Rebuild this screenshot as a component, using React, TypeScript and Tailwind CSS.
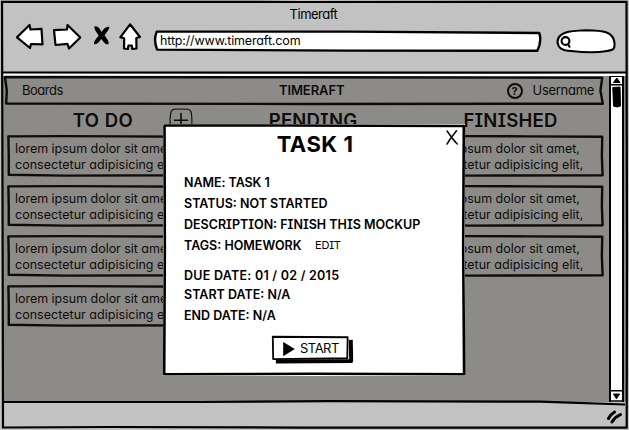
import React from 'react';

const INK = '#0c0c0a';

/* Hand-drawn rectangle stretched over its parent; the stroke keeps its thickness. */
function Outline({ d, color = INK, width = 2.4, fill = 'none' }: { d?: string; color?: string; width?: number; fill?: string }) {
  return (
    <svg className="pointer-events-none absolute inset-0 h-full w-full overflow-visible" viewBox="0 0 100 100" preserveAspectRatio="none">
      <path
        d={d ?? 'M.2 1 C20 0 40 0 60 1 L99.6 2 L99.4 50 L99.8 98 C70 98 50 99.5 30 99 L.4 97 L.4 50 Z'}
        fill={fill}
        stroke={color}
        strokeWidth={width}
        strokeLinejoin="round"
        vectorEffect="non-scaling-stroke"
      />
    </svg>
  );
}

function NavIcons() {
  return (
    <svg className="h-[30px] w-[128px]" viewBox="15 22 128 30" fill="#fff" stroke="#000" strokeWidth="2.2" strokeLinejoin="round" strokeLinecap="round">
      <path d="M17 37.3 L29.5 25 L30.5 29.5 L41.5 28.8 L42.5 44.3 L31 44 L30 48 Z" />
      <path d="M54 30.2 L67 29.5 L67.5 25 L80.3 37.5 L69 48.5 L67.5 43.8 L55.5 45 Z" />
      <path d="M94.5 26.5 C97.5 25.5 100 29 101.7 32 C103.5 29 106.5 26 109.3 27 C109.5 29.5 106 33 104.5 35.3 C106.5 38 109.5 42 108.5 44 C105.5 45.5 103 41 101.3 39 C99.5 41.5 97 45 94 44 C93.5 41.5 97 38 98.7 35.6 C97 33 94 29.5 94.5 26.5 Z" fill="#000" stroke="none" />
      <path d="M130 24.3 L140 37 L136.3 38 L136.5 48.5 L132.3 49 L131.8 45.5 L128.4 45.5 L128 49 L124 48.5 L124.2 38.3 L120.3 37.3 Z" />
    </svg>
  );
}

function Card() {
  return (
    <div className="relative h-10 w-[190px] pl-[7px] pt-[5px]">
      <Outline />
      <p className="whitespace-nowrap text-[12.5px] leading-4 tracking-[-0.03px]">lorem ipsum dolor sit amet,</p>
      <p className="whitespace-nowrap text-[12.5px] leading-4 tracking-[0.03px]">consectetur adipisicing elit,</p>
    </div>
  );
}

function Column({ title, count, headClass, add }: { title: string; count: number; headClass: string; add?: boolean }) {
  return (
    <section className="w-[190px]">
      <div className="relative flex h-[32px] items-start justify-center">
        <h2 className={headClass}>{title}</h2>
        {add && (
          <svg className="absolute left-[161px] top-[4px] h-6 w-6" viewBox="0 0 24 24" fill="none" stroke={INK} strokeWidth="1.6" strokeLinecap="round">
            <path d="M2 4 C3 1 5 1 12 1 C18 1 21 1 22 3.5 C23 7 23 15 22.5 21 C17 23.3 7 23 2 22 C.8 16 .8 9 2 4 Z" strokeWidth="1.1" />
            <path d="M12 5.5 V19 M5.5 12.2 H18.5" />
          </svg>
        )}
      </div>
      <div className="flex flex-col gap-[10px]">
        {Array.from({ length: count }, (_, i) => (
          <Card key={i} />
        ))}
      </div>
    </section>
  );
}

function Scrollbar() {
  return (
    <div className="flex w-[15px] flex-col items-center justify-between border-x-2 border-black bg-white">
      <svg className="h-[34px] w-[13px] shrink-0" viewBox="0 0 13 34">
        <path d="M0 .2 H13 M0 8.8 H13" stroke="#000" strokeWidth="1.6" />
        <path d="M3.5 6.5 L6.8 2 L10 6.5 Z" stroke="#000" />
        <path d="M2.8 11.5 L10 11 L10.5 30 Q7 32 3.5 30 Z" stroke="#000" strokeLinejoin="round" />
      </svg>
      <svg className="h-[12px] w-[13px] shrink-0" viewBox="0 0 13 12">
        <path d="M0 .8 H13 M0 11 H13" stroke="#000" strokeWidth="1.6" />
        <path d="M3.5 4 L9.5 4 L6.5 8.8 Z" stroke="#000" />
      </svg>
    </div>
  );
}

function Dialog() {
  return (
    <div className="absolute left-[163px] top-[124px] h-[252px] w-[302px] bg-white text-black">
      <Outline d="M.5 .6 L40 .6 L99.6 .8 L99.4 50 L99.7 99.3 L50 99.1 L.4 99.3 L.6 50 Z" color="#000" width={2.6} />
      <svg className="absolute right-[7px] top-[6px] h-[15px] w-[12px]" viewBox="0 0 12 15" fill="none" stroke="#000" strokeWidth="1.5" strokeLinecap="round">
        <path d="M1 1 C4 5 7 10 11.3 14 M10.5 .8 C7 5 4 9 1 14" />
      </svg>
      <h1 className="pl-[2px] pt-[6px] text-center text-[22px] font-bold leading-7 tracking-[0.5px]">TASK 1</h1>
      <div className="pl-[21px] pt-[14px] text-[12.5px] font-semibold leading-[21px]">
        <p className="h-[21px] tracking-[-0.05px]">NAME: TASK 1</p>
        <p className="h-[21px] tracking-[0px]">STATUS: NOT STARTED</p>
        <p className="h-[21px] tracking-[0px] [font-feature-settings:'cv11','cv08']">DESCRIPTION: FINISH THIS MOCKUP</p>
        <p className="flex h-[21px]">
          <span className="w-[131px] tracking-[0px]">TAGS: HOMEWORK</span>
          <span className="text-[11px] font-normal tracking-[-0.2px] [font-feature-settings:'cv08']">EDIT</span>
        </p>
        <div className="flex flex-col gap-[4px] pt-[12px] leading-4">
          <p className="tracking-[0.25px]">DUE DATE: 01 / 02 / 2015</p>
          <p className="-mt-px tracking-[0px]">START DATE: N/A</p>
          <p className="mt-px tracking-[0px]">END DATE: N/A</p>
        </div>
      </div>
      <button className="relative ml-[109px] mt-[13px] flex h-[24px] w-[78px] items-center pl-[11px]">
        <Outline d="M5 102 L101.5 100 L101 12" color="#000" width={4} />
        <Outline d="M1 -1 L97 1 L96.5 88 L1.5 92 Z" color="#000" width={1.8} fill="#fff" />
        <svg className="relative h-[15px] w-[12px]" viewBox="0 0 12 15">
          <path d="M.2 0 L11.8 7 L.2 14.3 Z" />
        </svg>
        <span className="relative -top-px ml-[5px] text-[13px] leading-4 tracking-[-0.5px]">START</span>
      </button>
    </div>
  );
}

export default function App() {
  return (
    <div className="relative flex h-[430px] w-[629px] flex-col overflow-hidden bg-[#c2c2c2] px-[3px] font-['Inter','Liberation_Sans',sans-serif] text-[#0c0c0a] [font-feature-settings:'cv11']">
      <header className="h-[73px] shrink-0">
        <p className="pr-[2px] pt-[6px] text-center text-[13px] leading-4 tracking-[-0.5px] text-black">Timeraft</p>
        <div className="flex items-start pl-3">
          <NavIcons />
          <div className="relative ml-[11px] mt-[9px] h-[20px] w-[388px] pl-[6px]">
            <Outline d="M.7 3 L50 3 L99.3 10 Q100 50 98.8 99 L50 98 L.8 93 Q-.2 45 .7 3 Z" color="#000" fill="#fff" />
            <span className="relative block text-[12.5px] leading-[19px] tracking-[-0.15px] text-black">http://www.timeraft.com</span>
          </div>
          <svg className="ml-[14px] mt-[7px] h-[25px] w-[61px]" viewBox="0 0 61 25" fill="#fff" stroke="#000" strokeWidth="2.1">
            <path d="M1.5 13 C2 3 12 2 30 1.3 C47 1.6 57 2 58.5 14 C59 21 57 21 51 22 C40 24 28 23.5 15 22 C6 22 2 19 1.5 13 Z" />
            <circle cx="9.5" cy="12" r="3.9" />
            <path d="M11.5 14.5 L14 18.5" />
          </svg>
        </div>
      </header>

      <div className="flex h-[329px] shrink-0 border-t-[3px] border-white bg-[#8d8b88]">
        <main className="flex w-[606px] flex-col pl-[2px]">
          <div className="relative mt-px flex h-[27px] w-[599px] items-center pl-[17px] pr-[10px] text-[13px]">
            <Outline d="M0 0 L50 1 L99.7 3 L99.4 50 L99.8 99 L50 100 L.2 98 L.3 50 Z" />
            <span className="w-[180px] tracking-[-0.5px]">Boards</span>
            <span className="grow pl-[77px] font-semibold tracking-[-0.1px]">TIMERAFT</span>
            <span className="relative mr-[10px] flex h-[16px] w-[16px] items-center justify-center rounded-full border-2 border-[#0c0c0a] text-[11px] font-bold leading-3">?</span>
            <span className="tracking-[-0.3px]">Username</span>
          </div>
          <div className="flex gap-[12.5px] pl-[3px]">
            <Column title="TO DO" count={4} add headClass="pt-[4px] text-[18.5px] font-semibold leading-6 tracking-[0.5px]" />
            <Column title="PENDING" count={4} headClass="pt-[4px] pl-[15px] text-[18.5px] font-semibold leading-6 tracking-[0.2px] [font-feature-settings:'cv08']" />
            <Column title="FINISHED" count={3} headClass="pt-[4px] pl-[5px] text-[18.5px] font-semibold leading-6 tracking-[0.2px] [font-feature-settings:'cv08']" />
          </div>
        </main>
        <Scrollbar />
      </div>

      <footer className="flex grow items-start justify-end pr-[3px] pt-[8px]">
        <svg className="h-[14px] w-[17px]" viewBox="0 0 17 14" fill="none" stroke="#000" strokeWidth="3" strokeLinecap="round">
          <path d="M2.5 8.5 Q5 4 8.5 2 M6 12 Q9 7 14.5 4.5" />
        </svg>
      </footer>

      <svg className="pointer-events-none absolute inset-0 h-[430px] w-[629px]" viewBox="0 0 629 430" fill="none" stroke="#000" strokeWidth="2.2">
        <path d="M2 1.8 L300 2 L626.5 1.8 L627 250 L626.7 427.6 L300 427.6 L110 427 L3 427.5 L2.5 200 Z" />
        <path d="M3 72.5 L300 72.7 L626 72.5" />
        <path d="M3 402 L200 402 L330 401.2 L540 401.6 L625 404.5" />
      </svg>
      <Dialog />
    </div>
  );
}
